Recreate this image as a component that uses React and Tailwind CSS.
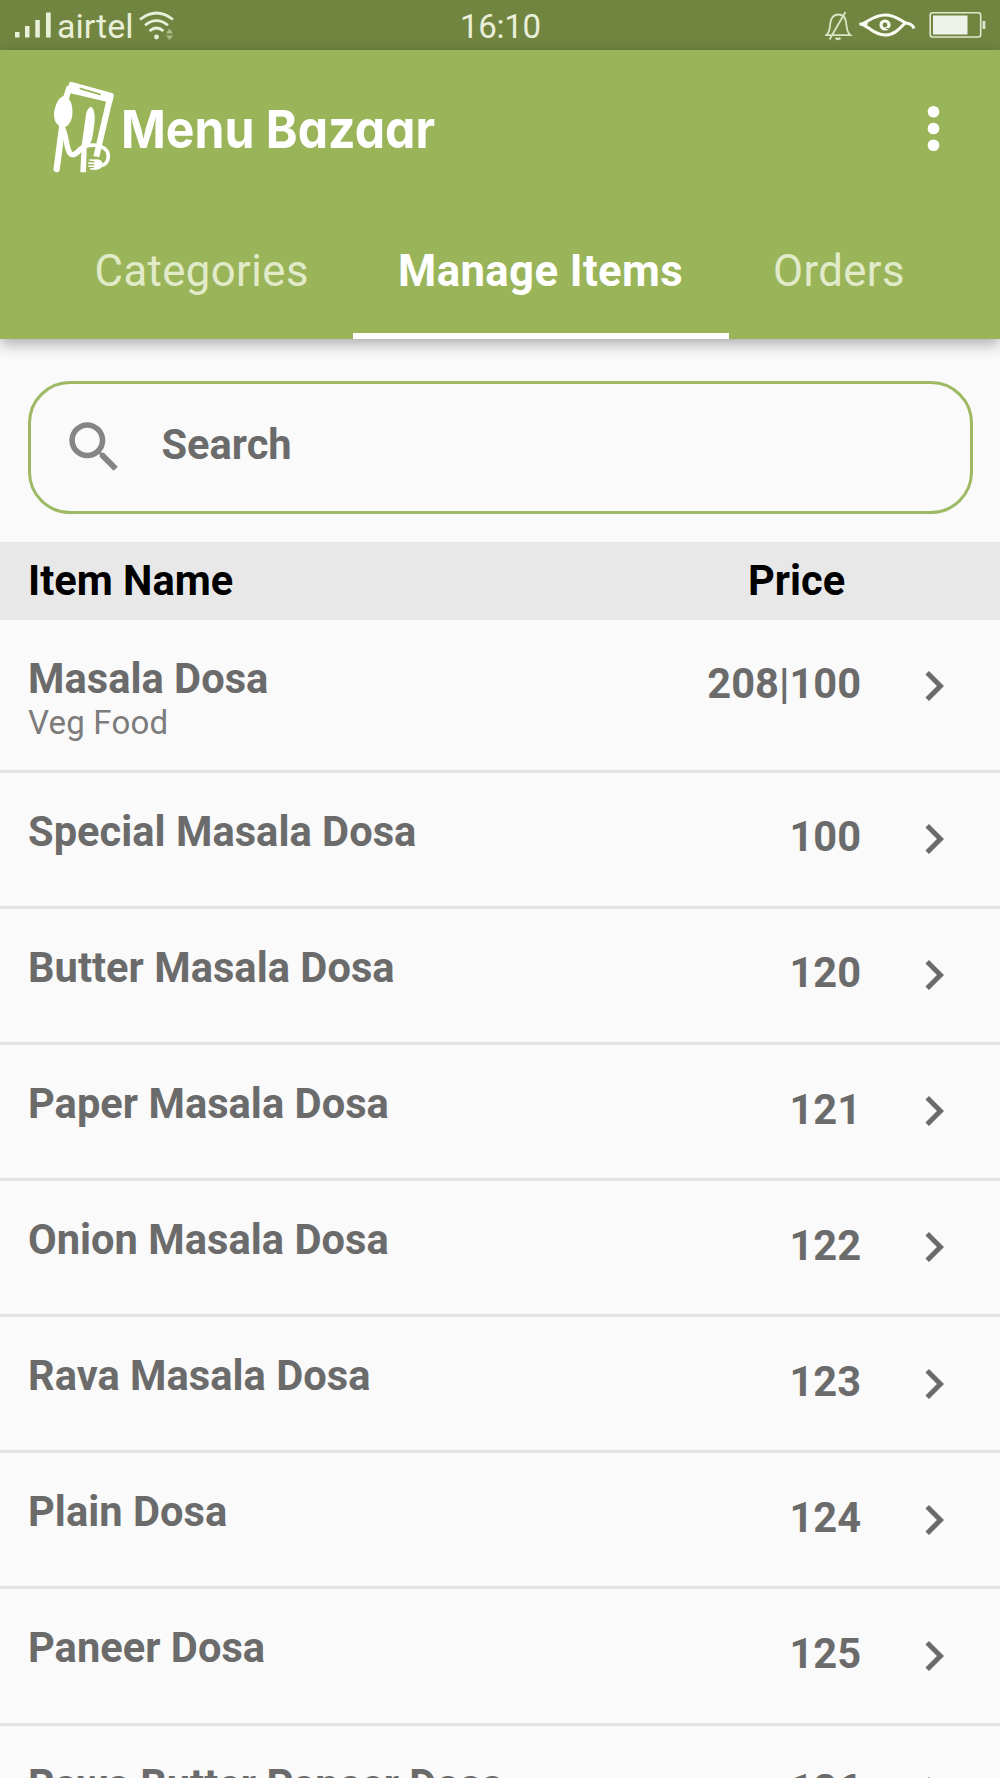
const items = [
  { name: 'Masala Dosa', type: 'Veg Food', price: '208|100' },
  { name: 'Special Masala Dosa', price: '100' },
  { name: 'Butter Masala Dosa', price: '120' },
  { name: 'Paper Masala Dosa', price: '121' },
  { name: 'Onion Masala Dosa', price: '122' },
  { name: 'Rava Masala Dosa', price: '123' },
  { name: 'Plain Dosa', price: '124' },
  { name: 'Paneer Dosa', price: '125' },
  { name: 'Rawa Butter Paneer Dosa', price: '126' },
];

function SignalIcon() {
  return (
    <svg className="ml-[15px] h-[50px] w-[37px]" viewBox="0 0 37 50" fill="#e9efd9">
      <rect x="0" y="32" width="4.5" height="5.5" />
      <rect x="10" y="26" width="4.5" height="11.5" />
      <rect x="20.3" y="20" width="4.5" height="17.5" />
      <rect x="31" y="12.5" width="4.7" height="25" />
    </svg>
  );
}

function WifiIcon() {
  return (
    <svg className="h-[50px] w-[36px]" viewBox="0 0 36 50" fill="none" stroke="#e9efd9" strokeWidth="2.7">
      <path d="M1 19.5 Q17.5 6.5 34 19.5" />
      <path d="M6 25.2 Q17.5 16 29 25.2" />
      <path d="M10.5 31 Q17.5 25 24.5 31" />
      <circle cx="17.5" cy="37" r="2.4" fill="#e9efd9" stroke="none" />
      <path d="M27 33.5 L30.5 28.5 L34 33.5Z M27 35.5 L30.5 40 L34 35.5Z" fill="#adbb8a" stroke="none" />
    </svg>
  );
}

function StatusIcons() {
  return (
    <svg className="h-[50px] w-[175px]" viewBox="0 0 175 50" fill="none">
      <g stroke="#dbe5c3" strokeWidth="1.8">
        <path d="M1 35.2 C5.5 32 4.5 28 5.5 22 Q7 14.5 13.5 14.5 Q20 14.5 21 22 C22 29 22 32 25.5 35.2 Z" />
        <path d="M4.5 39.5 L20.5 12" />
        <path d="M10.5 38 Q13 40 15.5 38" strokeWidth="2.2" />
      </g>
      <g stroke="#fafcf4" strokeWidth="3.1">
        <path d="M34.5 24.2 C41 24.5 47 15 60 15 C71 15 76 21 81 23 C84 24 87 23 89 28.5" />
        <path d="M36 24.2 C43 25 48 35 60 35 C70 35 75 28 80 23" />
        <circle cx="60" cy="25" r="4" strokeWidth="3.2" />
        <path d="M61 28.5 L65 28.5" stroke="#718541" strokeWidth="1" />
        <path d="M33.5 23.5 L43 22.5 L41.5 27Z" fill="#fafcf4" stroke="none" />
      </g>
      <rect x="105.2" y="12.8" width="50.5" height="24.2" rx="2.5" stroke="#dfe7cd" strokeWidth="1.6" />
      <rect x="108" y="15.5" width="34.5" height="19" fill="#eff2ea" />
      <rect x="157.5" y="21" width="2.8" height="8" fill="#dfe7cd" />
    </svg>
  );
}

function LogoMark() {
  return (
    <svg className="h-[100px] w-[84px]" viewBox="0 0 252 300" fill="none" stroke="#fff">
      {/* phone */}
      <path d="M78 66 L89 32" strokeWidth="18" />
      <path d="M94 25 L214 58 L211 72 L90 44Z" fill="#fff" strokeWidth="15" strokeLinejoin="round" />
      <path d="M119 37 L182 56" stroke="#9ab45a" strokeWidth="5" />
      <path d="M210 66 L169 242" strokeWidth="18" />
      {/* spoon */}
      <path d="M74 60 C92 66 99 90 97 116 C94 141 82 153 70 153 C55 153 41 138 42 113 C44 88 58 58 74 60Z" fill="#fff" stroke="none" />
      <path d="M67 148 L50 279" strokeWidth="19" strokeLinecap="round" />
      {/* monogram stroke */}
      <path d="M69 160 C80 178 79 234 97 236 C112 238 117 216 136 211" strokeWidth="16" />
      {/* knife */}
      <path d="M153 92 C164 99 166 121 163 145 C158 180 157 203 140 216 L138 289 L121 289 L125 207 L138 116 C140 104 146 94 153 92Z" fill="#fff" stroke="none" />
      {/* fork */}
      <path d="M136 211 C172 201 205 213 205 242 C204 259 194 269 180 268" strokeWidth="11" />
      <path d="M148 252 L174 254 M144 261 L174 263 M145 270 L174 272 M150 279 L172 278" strokeWidth="5" />
      <path d="M163 251 C184 248 188 257 187 265 C187 276 178 283 163 281Z" fill="#fff" stroke="none" />
    </svg>
  );
}

function StatusBar() {
  return (
    <div className="flex h-[50px] bg-[#718541] text-[#e9efd9]">
      <div className="flex w-[462px]">
        <SignalIcon />
        <span className="ml-[5px] w-[79px] text-[34px] leading-[52px]">airtel</span>
        <span className="ml-[3px]"><WifiIcon /></span>
      </div>
      <span className="w-[363px] -ml-[2px] text-[33px] leading-[54px] tracking-[-0.3px]">16:10</span>
      <span className="ml-[2px]"><StatusIcons /></span>
    </div>
  );
}

function Header() {
  return (
    <header className="relative h-[289px] bg-[#9ab45a] text-white shadow-[0_5px_14px_rgba(0,0,0,0.32)]">
      <div className="flex h-[155px] pt-[26px] pl-[40px]">
        <LogoMark />
        <h1 className="ml-[-3.5px] w-[779.5px] origin-left scale-x-[0.917] pt-[23px] text-[52.5px] leading-[60px] font-bold whitespace-nowrap font-[Inter,sans-serif] [font-feature-settings:'cv11']">Menu Bazaar</h1>
        <svg className="mt-[18.5px] size-[67px]" viewBox="0 0 24 24" fill="#fff">
          <circle cx="12" cy="6" r="2.1" />
          <circle cx="12" cy="12" r="2.1" />
          <circle cx="12" cy="18" r="2.1" />
        </svg>
      </div>
      <nav className="flex h-[134px] text-[43.7px] leading-[50px] tracking-[0.4px] whitespace-nowrap">
        <div className="w-[353px] pt-[41px] pl-[94.6px] text-[#e1ebc9]">Categories</div>
        <div className="w-[376px] border-b-6 border-white pt-[41px] pl-[45px] font-bold">Manage Items</div>
        <div className="flex-1 pt-[41px] pl-[44px] text-[#e1ebc9]">Orders</div>
      </nav>
    </header>
  );
}

function ItemRow({ item }) {
  return (
    <li className={`flex shrink-0 border-b-3 border-[#e3e3e3] text-[41.6px] leading-[48px] text-[#6b6b6b] ${item.type ? 'h-[153px]' : 'h-[136.17px]'}`}>
      <div className="w-[620px] pt-[35px] pl-[28px]">
        <div className="font-bold tracking-[0.03px] whitespace-nowrap">{item.name}</div>
        {item.type && <div className="text-[33px] leading-[40px] tracking-[0.2px] text-[#7c7c7c]">{item.type}</div>}
      </div>
      <div className="w-[241px] pt-[40.7px] text-right font-bold">{item.price}</div>
      <svg className="mt-[36.5px] ml-[43.2px] size-[60px]" viewBox="0 0 24 24" fill="#6b6b6b">
        <path d="M10 6 8.59 7.41 13.17 12l-4.58 4.59L10 18l6-6z" />
      </svg>
    </li>
  );
}

export default function App() {
  return (
    <div className="flex h-[1778px] w-[1000px] flex-col overflow-hidden bg-[#fafafa] font-[Roboto,sans-serif]">
      <StatusBar />
      <Header />
      <div className="mt-[42px] ml-[28px] flex h-[133px] w-[945px] shrink-0 rounded-[42px] border-3 border-[#9eb964]">
        <svg className="mt-[30px] ml-[30px] size-[66.5px]" viewBox="0 0 24 24" fill="#858585">
          <path d="M15.5 14h-.79l-.28-.27A6.471 6.471 0 0 0 16 9.5 6.5 6.5 0 1 0 9.5 16c1.61 0 3.09-.59 4.23-1.57l.27.28v.79l5 4.99L20.49 19l-4.99-5zm-6 0C7.01 14 5 11.99 5 9.5S7.01 5 9.5 5 14 7.01 14 9.5 11.99 14 9.5 14z" />
        </svg>
        <span className="mt-[37px] ml-[34px] text-[41.6px] leading-[48px] font-bold text-[#6b6b6b]">Search</span>
      </div>
      <div className="mt-[28px] flex h-[77.5px] shrink-0 bg-[#e8e8e8] pt-[15.4px] text-[41.6px] leading-[48px] font-bold text-black">
        <span className="w-[748px] pl-[28px]">Item Name</span>
        <span>Price</span>
      </div>
      <ul className="flex flex-col">
        {items.map((item) => <ItemRow key={item.name} item={item} />)}
      </ul>
    </div>
  );
}
